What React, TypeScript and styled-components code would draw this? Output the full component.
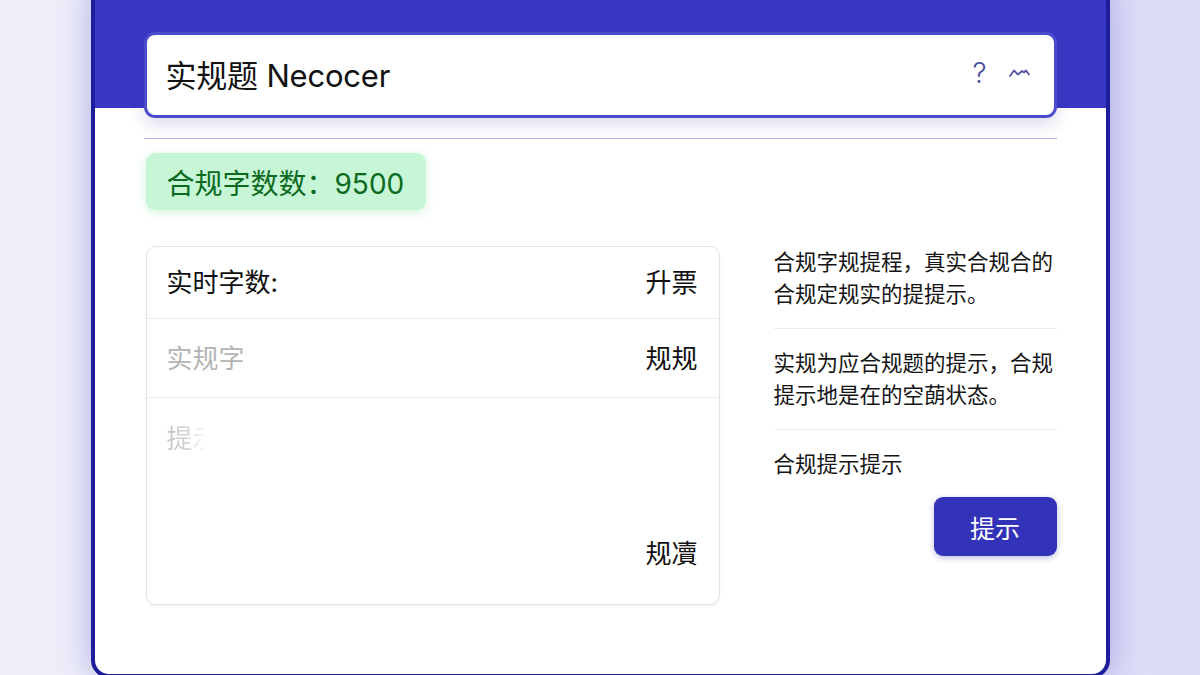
import React from 'react';
import styled, { createGlobalStyle } from 'styled-components';

const GlobalStyle = createGlobalStyle`
  html, body {
    margin: 0;
    padding: 0;
    overflow: hidden;
  }
  body {
    font-family: Inter, "Noto Sans CJK SC", "Noto Sans", sans-serif;
    background: linear-gradient(90deg, #efeffa 0%, #e9e9f9 45%, #dcdcf7 100%);
  }
`;

const tips = [
  ['合规字规提程，真实合规合的', '合规定规实的提提示。'],
  ['实规为应合规题的提示，合规', '提示地是在的空蓢状态。'],
  ['合规提示提示'],
];

function Squiggle() {
  return (
    <svg width="21" height="12" viewBox="0 0 21 12" fill="none">
      <path
        d="M1 9 L5 3.5 L9 7.5 L13 4 L15 5.5 L17 3.5 L20 7.5"
        stroke="#5454a8"
        strokeWidth="1.8"
        strokeLinecap="round"
        strokeLinejoin="round"
      />
    </svg>
  );
}

function App() {
  return (
    <Page>
      <GlobalStyle />
      <Window>
        <Header>
          <SearchBox>
            <Title>实规题 Necocer</Title>
            <Tools>
              <Help>?</Help>
              <Squiggle />
            </Tools>
          </SearchBox>
        </Header>
        <Body>
          <Rule />
          <CountBadge>合规字数数：9500</CountBadge>
          <Columns>
            <Card>
              <CardRow $height={72}>
                <Label>实时字数:</Label>
                <Value>升票</Value>
              </CardRow>
              <CardRow $height={79}>
                <Placeholder>实规字</Placeholder>
                <Value>规规</Value>
              </CardRow>
              <Editor>
                <FadedHint>提示</FadedHint>
                <Value>规凟</Value>
              </Editor>
            </Card>
            <Side>
              {tips.map((lines, i) => (
                <Tip key={i} $last={i === tips.length - 1}>
                  {lines.map((l, j) => (
                    <div key={j}>{l}</div>
                  ))}
                </Tip>
              ))}
              <HintButton>提示</HintButton>
            </Side>
          </Columns>
        </Body>
      </Window>
    </Page>
  );
}

export default App;

const Page = styled.div`
  width: 100vw;
  height: 100vh;
  display: flex;
  justify-content: center;
  align-items: flex-start;
`;

const Window = styled.div`
  width: 1019px;
  height: 698px;
  margin-top: -20px;
  box-sizing: border-box;
  border: 4px solid #1e1e9c;
  border-radius: 18px;
  background: #fff;
  overflow: hidden;
  display: flex;
  flex-direction: column;
  box-shadow: 0 0 34px rgba(70, 70, 200, 0.38);
`;

const Header = styled.div`
  background: #3838c4;
  padding: 48px 49px 0;
  height: 124px;
  box-sizing: border-box;
  position: relative;
  z-index: 1;
`;

const SearchBox = styled.div`
  height: 86px;
  box-sizing: border-box;
  border: 3px solid #4b4bcb;
  border-radius: 11px;
  background: #fff;
  display: flex;
  align-items: center;
  justify-content: space-between;
  padding: 0 24px 4px 19px;
  box-shadow: 0 7px 16px rgba(40, 40, 140, 0.16);
`;

const Title = styled.div`
  font-size: 31px;
  color: #121212;
  letter-spacing: -0.2px;
`;

const Tools = styled.div`
  display: flex;
  align-items: center;
  gap: 22px;
`;

const Help = styled.span`
  font-size: 28px;
  font-weight: 300;
  color: #4a4a9e;
  line-height: 1;
`;

const Body = styled.div`
  padding: 0 49px;
  display: flex;
  flex-direction: column;
  align-items: flex-start;
`;

const Rule = styled.div`
  align-self: stretch;
  margin-top: 30px;
  height: 1px;
  background: #b3b3dc;
`;

const CountBadge = styled.div`
  margin: 14px 0 0 2px;
  height: 57px;
  display: flex;
  align-items: center;
  padding: 0 22px 0 21px;
  border-radius: 9px;
  background: #c7f6d6;
  color: #0b6a1e;
  font-size: 28px;
  box-shadow: 0 2px 10px rgba(120, 220, 150, 0.35);
`;

const Columns = styled.div`
  margin: 36px 0 0 2px;
  display: grid;
  grid-template-columns: 574px 283px;
  column-gap: 54px;
  align-items: start;
`;

const Card = styled.div`
  height: 359px;
  box-sizing: border-box;
  border: 1.5px solid #e2e2e2;
  border-radius: 10px;
  display: flex;
  flex-direction: column;
  box-shadow: 0 2px 3px rgba(0, 0, 0, 0.05);
`;

const CardRow = styled.div<{ $height: number }>`
  height: ${p => p.$height}px;
  box-sizing: border-box;
  padding: 0 21px 4px 20px;
  display: flex;
  align-items: center;
  justify-content: space-between;
  border-bottom: 1.5px solid #ececec;
`;

const Label = styled.div`
  font-size: 26px;
  color: #111;
`;

const Value = styled.div`
  font-size: 26px;
  color: #111;
`;

const Placeholder = styled.div`
  font-size: 26px;
  color: #b4b4b4;
`;

const Editor = styled.div`
  flex: 1;
  padding: 20px 21px 34px 20px;
  display: flex;
  flex-direction: column;
  justify-content: space-between;
  align-items: flex-end;
`;

const FadedHint = styled.div`
  align-self: flex-start;
  font-size: 26px;
  background: linear-gradient(90deg, #c4c4c4 0%, #d4d4d4 40%, rgba(255, 255, 255, 0) 75%);
  -webkit-background-clip: text;
  background-clip: text;
  color: transparent;
`;

const Side = styled.div`
  padding-top: 0;
  display: flex;
  flex-direction: column;
`;

const Tip = styled.div<{ $last?: boolean }>`
  font-size: 21.5px;
  line-height: 32px;
  color: #151515;
  white-space: nowrap;
  padding: ${p => (p.$last ? '18px 0 0' : '18px 0 18px')};
  border-bottom: ${p => (p.$last ? 'none' : '1px solid #ececec')};
  &:first-child {
    padding-top: 0;
  }
`;

const HintButton = styled.button`
  align-self: flex-end;
  margin-top: 17px;
  width: 123px;
  height: 59px;
  border: none;
  border-radius: 9px;
  background: #3333b9;
  color: #fff;
  font-family: inherit;
  font-size: 25px;
  box-shadow: 0 2px 6px rgba(40, 40, 160, 0.3);
`;
